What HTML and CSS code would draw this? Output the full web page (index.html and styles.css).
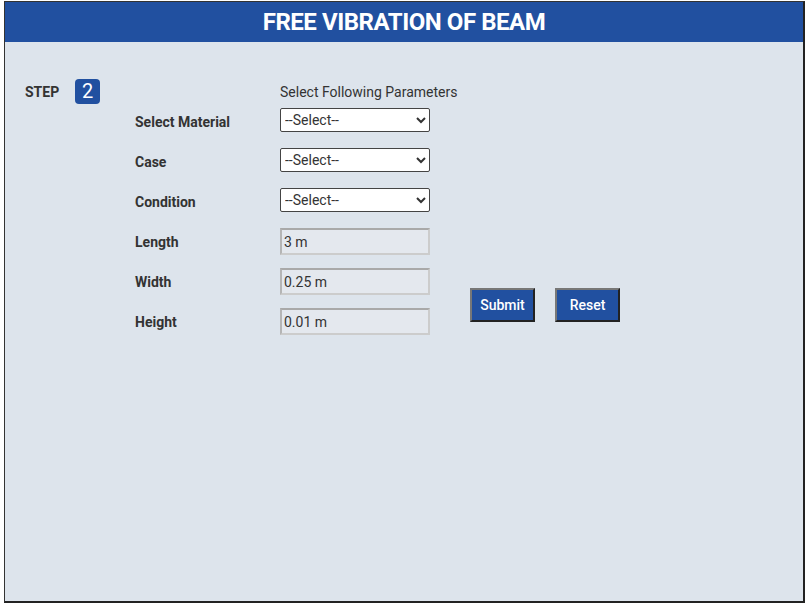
FILE: index.html
```html
<!DOCTYPE html>
<html>
<head>
<meta charset="utf-8">
<title>Free Vibration of Beam</title>
<link rel="stylesheet" href="styles.css">
</head>
<body>
<div class="frame">
  <header class="header">FREE VIBRATION OF BEAM</header>
  <main class="content">
    <div class="step">
      <span class="step-label">STEP</span>
      <span class="step-badge">2</span>
    </div>
    <form class="form">
      <div class="heading">Select Following Parameters</div>

      <label class="label">Select Material</label>
      <select class="select"><option>--Select--</option></select>

      <label class="label">Case</label>
      <select class="select"><option>--Select--</option></select>

      <label class="label">Condition</label>
      <select class="select"><option>--Select--</option></select>

      <label class="label">Length</label>
      <input class="input" type="text" value="3 m" readonly>

      <label class="label">Width</label>
      <input class="input" type="text" value="0.25 m" readonly>

      <label class="label">Height</label>
      <input class="input" type="text" value="0.01 m" readonly>

      <div class="actions">
        <button type="button" class="btn">Submit</button>
        <button type="button" class="btn">Reset</button>
      </div>
    </form>
  </main>
</div>
</body>
</html>
```

FILE: styles.css
```css
* { box-sizing: border-box; }
html, body { margin: 0; padding: 0; background: #ffffff; }
body { font-family: Roboto, "Liberation Sans", Arial, sans-serif; color: #333333; }

.frame {
  margin: 1px 0 0 4px;
  width: 801px;
  height: 602px;
  background: #dde4ec;
  border-top: 1px solid #333333;
  border-left: 1px solid #333333;
  border-right: 2px solid #222222;
  border-bottom: 2px solid #222222;
  display: flex;
  flex-direction: column;
}

.header {
  height: 40px;
  background: #2150a0;
  color: #ffffff;
  font-weight: 700;
  font-size: 24px;
  letter-spacing: -0.45px;
  line-height: 40px;
  text-align: center;
}

.content {
  display: flex;
  padding: 36px 0 0 20px;
}

.step {
  width: 110px;
  height: 25px;
  margin-top: 1px;
  display: flex;
  align-items: center;
  gap: 16px;
}

.step-label {
  font-size: 14px;
  font-weight: 700;
  color: #333333;
}

.step-badge {
  width: 25px;
  height: 25px;
  border-radius: 4px;
  background: #2150a0;
  color: #ffffff;
  font-size: 20px;
  line-height: 25px;
  text-align: center;
}

.form {
  display: grid;
  grid-template-columns: 145px 150px auto;
  grid-template-rows: 30px repeat(6, 40px);
  margin: 0;
}

.heading {
  grid-column: 2 / span 2;
  font-size: 14px;
  line-height: 28px;
  color: #333333;
}

.label {
  grid-column: 1;
  font-size: 14px;
  font-weight: 700;
  line-height: 28px;
  color: #333333;
}

.select {
  grid-column: 2;
  width: 150px;
  height: 24px;
  font-family: Roboto, "Liberation Sans", Arial, sans-serif;
  font-size: 14px;
  color: #333333;
  background: #ffffff;
  border: 1px solid #444444;
  border-radius: 2px;
  padding: 0;
  margin: 0;
}

.input {
  grid-column: 2;
  width: 150px;
  height: 27px;
  font-family: Roboto, "Liberation Sans", Arial, sans-serif;
  font-size: 14px;
  color: #333333;
  background: #e4e8ee;
  border: 2px solid #cccccc;
  border-top-color: #a9a9a9;
  border-left-color: #b5b5b5;
  padding: 0 2px;
  margin: 0;
  outline: none;
}

.actions {
  grid-column: 3;
  grid-row: 6 / span 2;
  align-self: start;
  margin: 20px 0 0 40px;
  display: flex;
  gap: 20px;
}

.btn {
  width: 65px;
  height: 34px;
  background: #2150a0;
  color: #ffffff;
  font-family: Roboto, "Liberation Sans", Arial, sans-serif;
  font-size: 14px;
  font-weight: 500;
  border: 2px solid #222222;
  border-top-color: #777777;
  border-left-color: #777777;
  padding: 0;
  margin: 0;
}
```
